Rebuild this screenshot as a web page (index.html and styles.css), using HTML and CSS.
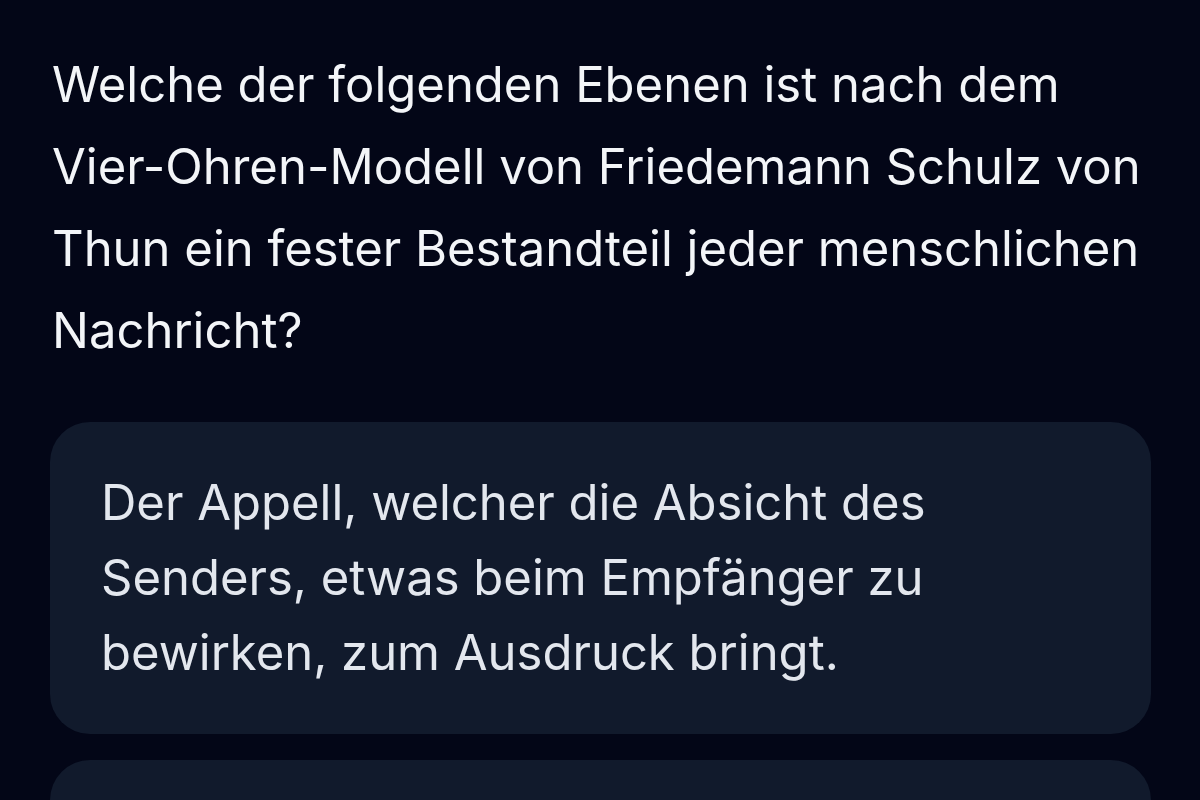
FILE: index.html
```html
<!DOCTYPE html>
<html lang="de">
<head>
<meta charset="utf-8">
<title>Quiz</title>
<link rel="stylesheet" href="styles.css">
</head>
<body>
<main class="quiz">
  <h1 class="question">Welche der folgenden Ebenen ist nach dem Vier-Ohren-Modell von Friedemann Schulz von Thun ein fester Bestandteil jeder menschlichen Nachricht?</h1>
  <div class="options">
    <div class="option">Der Appell, welcher die Absicht des Senders, etwas beim Empfänger zu bewirken, zum Ausdruck bringt.</div>
    <div class="option">Die Selbstoffenbarung, welche Informationen über den Sender preisgibt.</div>
  </div>
</main>
</body>
</html>
```

FILE: styles.css
```css
html, body {
  margin: 0;
  padding: 0;
  background: #030617;
  height: 100%;
  overflow: hidden;
}
body {
  font-family: Inter, "Noto Sans", sans-serif;
}
.quiz {
  padding: 44px 49px 0 50px;
}
.question {
  margin: 0 0 50px 2px;
  font-size: 49px;
  line-height: 82px;
  font-weight: 400;
  color: #f3f5f8;
}
.options {
  display: flex;
  flex-direction: column;
  gap: 26px;
}
.option {
  background: #111a2c;
  border-radius: 40px;
  padding: 43px 51px 44px 51px;
  font-size: 49px;
  line-height: 75px;
  color: #e3e7ee;
}
```
